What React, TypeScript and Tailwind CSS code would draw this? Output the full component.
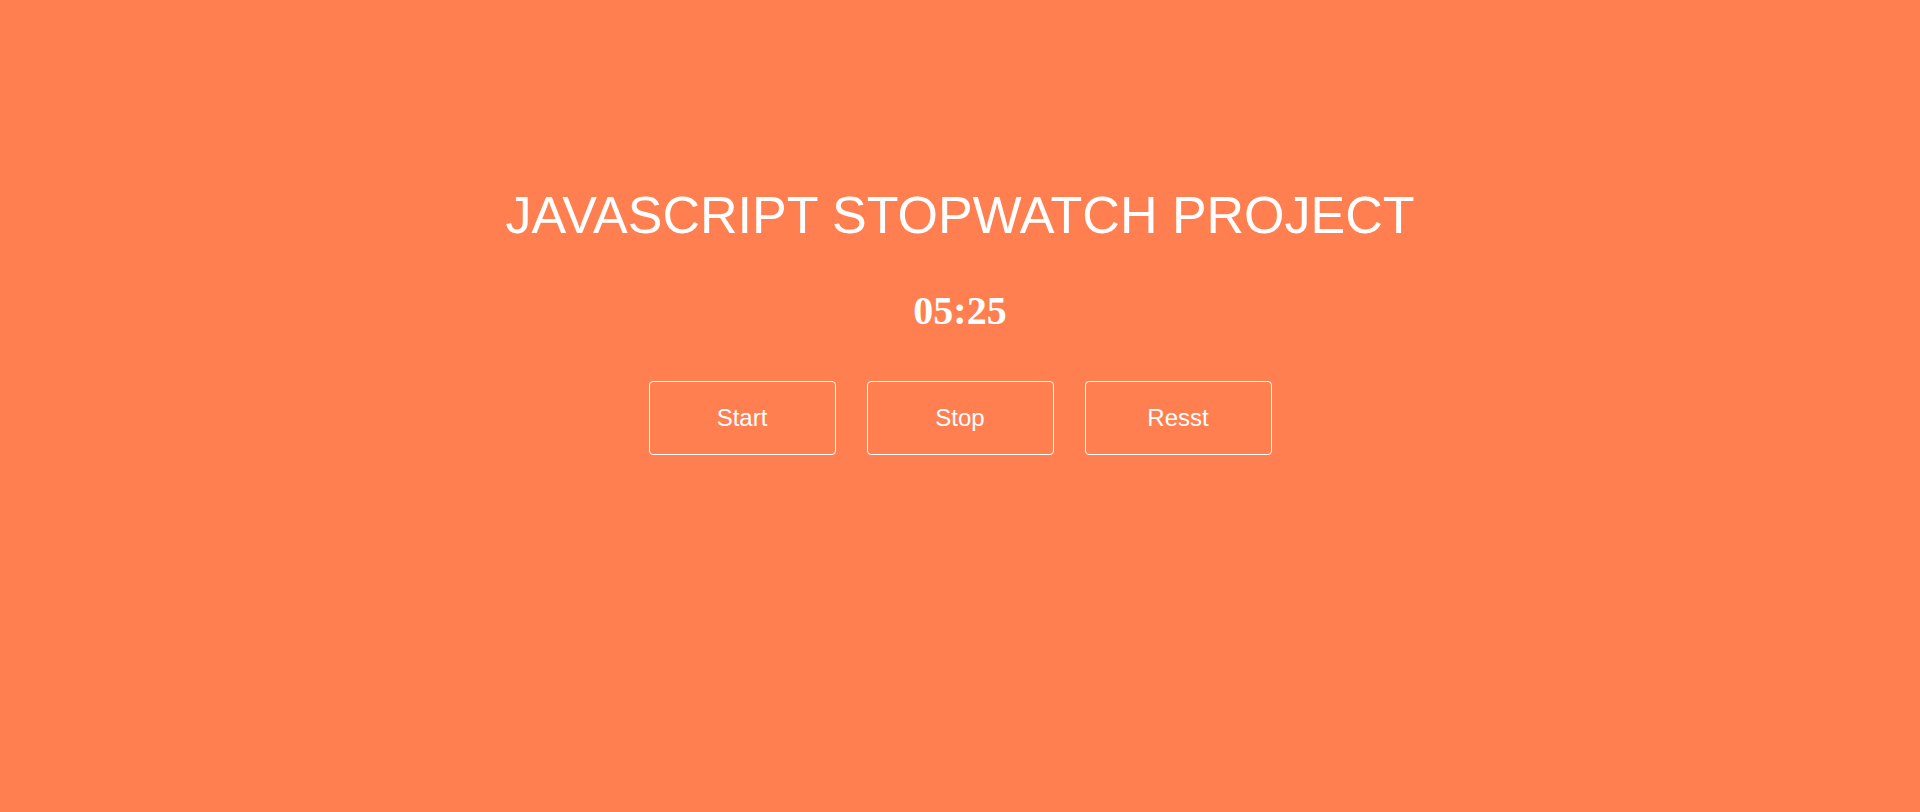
import React from 'react';

const fmt = (n: number) => String(n).padStart(2, '0');

export default function App() {
  const [seconds, setSeconds] = React.useState(25);
  const [minutes, setMinutes] = React.useState(5);
  const timer = React.useRef<number | null>(null);

  const start = () => {
    if (timer.current) return;
    timer.current = window.setInterval(() => {
      setSeconds((s) => {
        if (s === 59) {
          setMinutes((m) => m + 1);
          return 0;
        }
        return s + 1;
      });
    }, 1000);
  };

  const stop = () => {
    if (timer.current) window.clearInterval(timer.current);
    timer.current = null;
  };

  const reset = () => {
    stop();
    setSeconds(0);
    setMinutes(0);
  };

  return (
    <div className="min-h-[812px] w-full bg-[#ff7f50] text-white flex flex-col items-center pt-[186px]">
      {/* Title */}
      <h1 className="text-[52px] leading-[58px] font-['Liberation_Sans',Arial,sans-serif] font-normal">
        JAVASCRIPT STOPWATCH PROJECT
      </h1>

      {/* Time */}
      <div className="mt-[44px] text-[40px] leading-[46px] font-bold font-['Liberation_Serif','Times_New_Roman',serif]">
        {fmt(minutes)}:{fmt(seconds)}
      </div>

      {/* Controls */}
      <div className="mt-[47px] flex gap-[31px] font-['Liberation_Sans',Arial,sans-serif]">
        <button
          onClick={start}
          className="w-[187px] h-[74px] border border-white rounded-[4px] text-[24px] text-white bg-transparent"
        >
          Start
        </button>
        <button
          onClick={stop}
          className="w-[187px] h-[74px] border border-white rounded-[4px] text-[24px] text-white bg-transparent"
        >
          Stop
        </button>
        <button
          onClick={reset}
          className="w-[187px] h-[74px] border border-white rounded-[4px] text-[24px] text-white bg-transparent"
        >
          Resst
        </button>
      </div>
    </div>
  );
}
